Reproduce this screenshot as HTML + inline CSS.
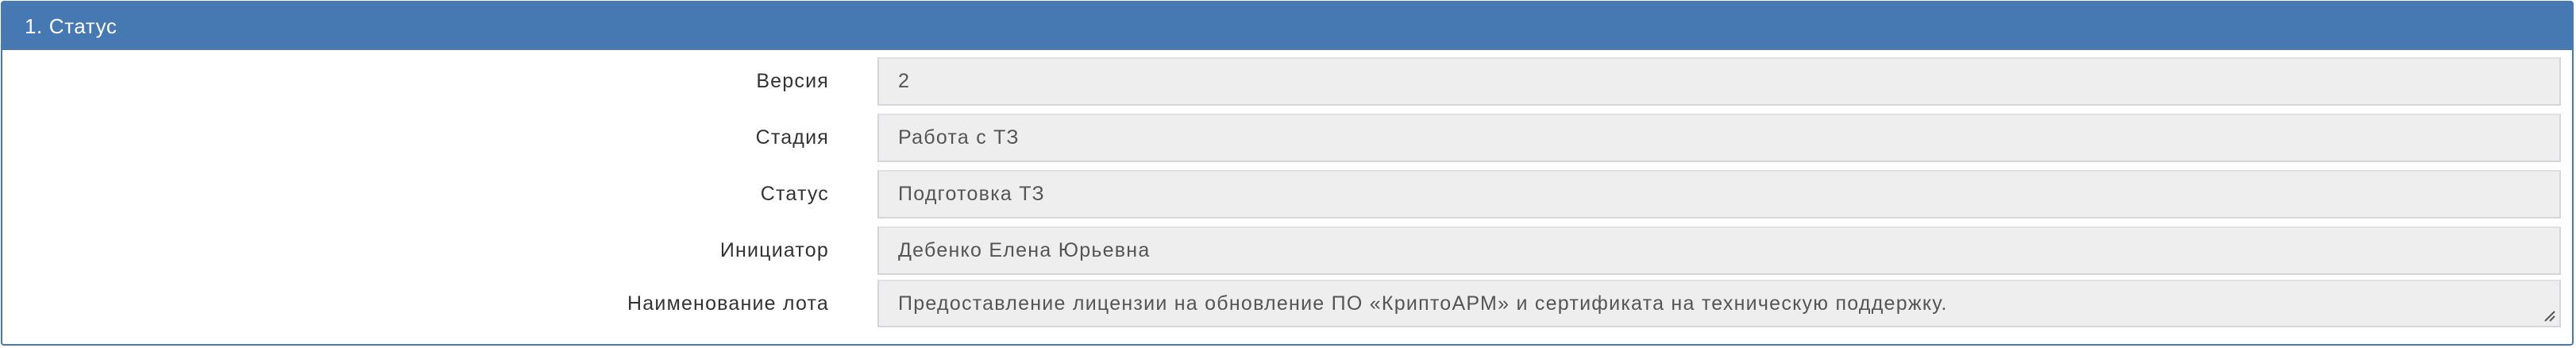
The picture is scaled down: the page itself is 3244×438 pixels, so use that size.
<!DOCTYPE html>
<html><head><meta charset="utf-8"><style>
body{margin:0;width:3244px;height:438px;background:#fff;font-family:"Liberation Sans",sans-serif;overflow:hidden;position:relative;letter-spacing:1px}
.panel{position:absolute;left:1px;top:1px;width:3236px;height:430px;border:2px solid #4679b2;border-radius:4px;box-sizing:content-box}
.hd{position:absolute;left:0;top:0;right:0;height:60px;background:#4679b2;color:#fff;font-size:26px;line-height:60px;padding-left:28px;letter-spacing:0.6px}
.lb{position:absolute;right:2200px;font-size:25px;color:#333;text-align:right;line-height:60px;letter-spacing:1.2px}
.in{position:absolute;left:1105px;width:2120px;background:#eee;border:2px solid #d3d6da;border-top-color:#dfe1e4;font-size:25px;color:#555;line-height:57px;padding-left:24px;box-sizing:border-box;height:61px;letter-spacing:1.25px}
</style></head><body>
<div class="panel"><div class="hd">1. Статус</div></div>
<div class="lb" style="top:72px">Версия</div><div class="in" style="top:72px">2</div>
<div class="lb" style="top:143px">Стадия</div><div class="in" style="top:143px">Работа с ТЗ</div>
<div class="lb" style="top:214px">Статус</div><div class="in" style="top:214px">Подготовка ТЗ</div>
<div class="lb" style="top:285px">Инициатор</div><div class="in" style="top:285px">Дебенко Елена Юрьевна</div>
<div class="lb" style="top:352px">Наименование лота</div><div class="in" style="top:352px;height:60px;line-height:56px">Предоставление лицензии на обновление ПО «КриптоАРМ» и сертификата на техническую поддержку.
<svg style="position:absolute;right:4px;bottom:4px" width="16" height="16"><path d="M2 14L14 2M8 14L14 8" stroke="#555" stroke-width="2"/></svg></div>
</body></html>
